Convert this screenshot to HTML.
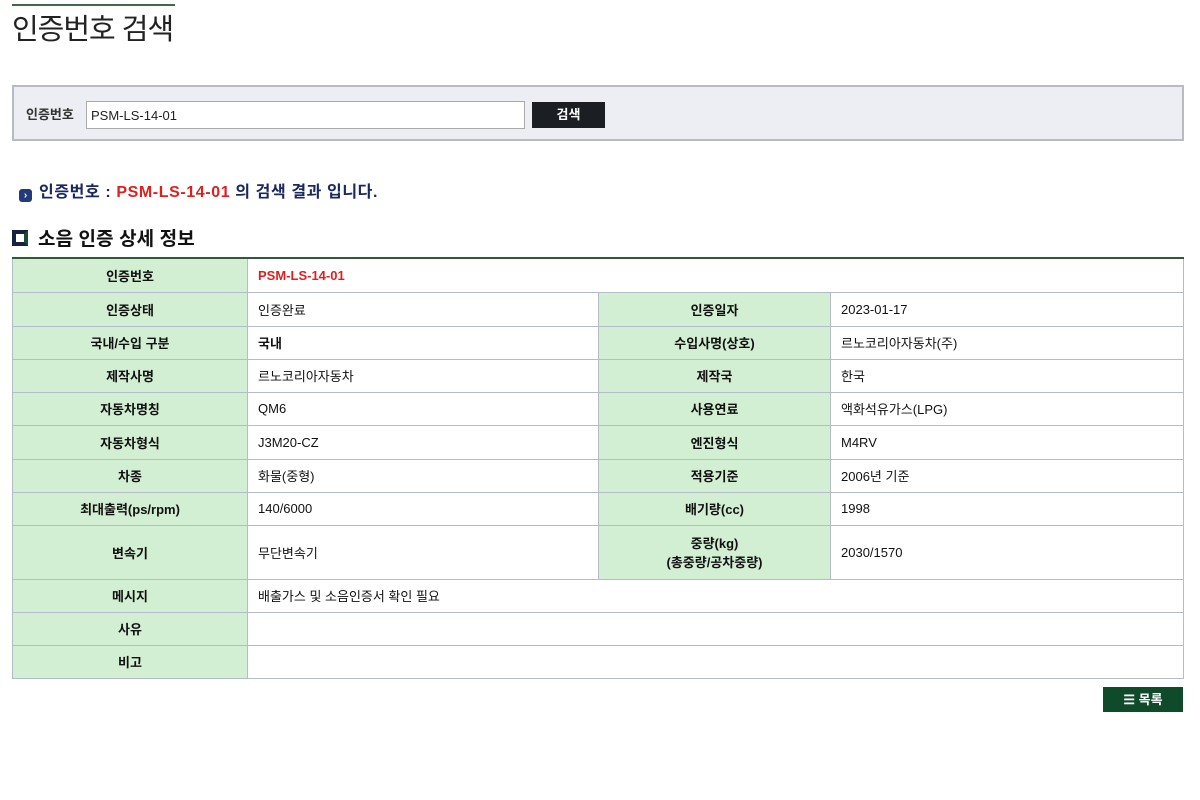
<!DOCTYPE html>
<html><head><meta charset="utf-8"><style>
*{margin:0;padding:0;box-sizing:border-box}
body{width:1200px;height:800px;background:#fff;font-family:"Liberation Sans","Noto Sans CJK KR",sans-serif;color:#222;position:relative;overflow:hidden}
.tl{position:absolute;left:12px;top:4px;width:163px;height:2px;background:#3d6b4a}
h1{position:absolute;left:12px;top:6px;font-size:29px;font-weight:400;color:#222;letter-spacing:-1px}
.sb{position:absolute;left:12px;top:85px;width:1172px;height:56px;background:#eceef3;border:2px solid #b8bcc2}
.sb .lb{position:absolute;left:12px;top:17px;font-size:13px;font-weight:700;color:#333}
.sb .in{position:absolute;left:72px;top:14px;width:439px;height:28px;background:#fff;border:1px solid #aaa;font-size:13px;padding:6px 4px}
.sb .bt{position:absolute;left:518px;top:15px;width:73px;height:26px;background:#1b1f24;color:#fff;font-size:13px;font-weight:700;text-align:center;line-height:26px}
.res{position:absolute;left:19px;top:178px;font-size:16px;font-weight:700;color:#1a2860;letter-spacing:0.6px}
.res i{display:inline-block;width:13px;height:13px;background:#233a7a;border-radius:3px;vertical-align:-1px;margin-right:7px;color:#fff;font-style:normal;font-size:10px;line-height:13px;text-align:center;letter-spacing:0}
.red{color:#e01e1e}
.sec{position:absolute;left:12px;top:224px;font-size:19px;font-weight:700;color:#111;letter-spacing:0.1px}
.sec i{display:inline-block;width:16px;height:16px;border:4px solid #14233f;border-right-color:#1b4a2e;vertical-align:-1px;margin-right:10px;background:#fff}
table{position:absolute;left:12px;top:257px;width:1172px;border-collapse:collapse;border-top:2px solid #2f5a3a;font-size:13px;color:#111}
td{border:1px solid #b3bcc8;padding:0 10px;height:33px}
td.h{background:#d3efd3;text-align:center;font-weight:700;width:235px}
td.h2{background:#d3efd3;text-align:center;font-weight:700;width:232px}
.lst{position:absolute;left:1103px;top:687px;width:80px;height:25px;background:#0f4a2b;color:#fff;font-size:13px;font-weight:700;text-align:center;line-height:25px}
</style></head><body>
<div class="tl"></div>
<h1>인증번호 검색</h1>
<div class="sb"><span class="lb">인증번호</span><div class="in">PSM-LS-14-01</div><div class="bt">검색</div></div>
<div class="res"><i>›</i>인증번호 : <span class="red">PSM-LS-14-01</span> 의 검색 결과 입니다.</div>
<div class="sec"><i></i>소음 인증 상세 정보</div>
<table>
<tr><td class="h" style="height:34px">인증번호</td><td colspan="3" class="red" style="font-weight:700">PSM-LS-14-01</td></tr>
<tr><td class="h" style="height:34px">인증상태</td><td style="width:351px">인증완료</td><td class="h2">인증일자</td><td>2023-01-17</td></tr>
<tr><td class="h">국내/수입 구분</td><td style="font-weight:700">국내</td><td class="h2">수입사명(상호)</td><td>르노코리아자동차(주)</td></tr>
<tr><td class="h">제작사명</td><td>르노코리아자동차</td><td class="h2">제작국</td><td>한국</td></tr>
<tr><td class="h">자동차명칭</td><td>QM6</td><td class="h2">사용연료</td><td>액화석유가스(LPG)</td></tr>
<tr><td class="h" style="height:34px">자동차형식</td><td>J3M20-CZ</td><td class="h2">엔진형식</td><td>M4RV</td></tr>
<tr><td class="h">차종</td><td>화물(중형)</td><td class="h2">적용기준</td><td>2006년 기준</td></tr>
<tr><td class="h">최대출력(ps/rpm)</td><td>140/6000</td><td class="h2">배기량(cc)</td><td>1998</td></tr>
<tr><td class="h" style="height:54px">변속기</td><td>무단변속기</td><td class="h2">중량(kg)<br>(총중량/공차중량)</td><td>2030/1570</td></tr>
<tr><td class="h" style="height:33px">메시지</td><td colspan="3">배출가스 및 소음인증서 확인 필요</td></tr>
<tr><td class="h" style="height:33px">사유</td><td colspan="3"></td></tr>
<tr><td class="h" style="height:32px">비고</td><td colspan="3"></td></tr>
</table>
<div class="lst">☰ 목록</div>
</body></html>
